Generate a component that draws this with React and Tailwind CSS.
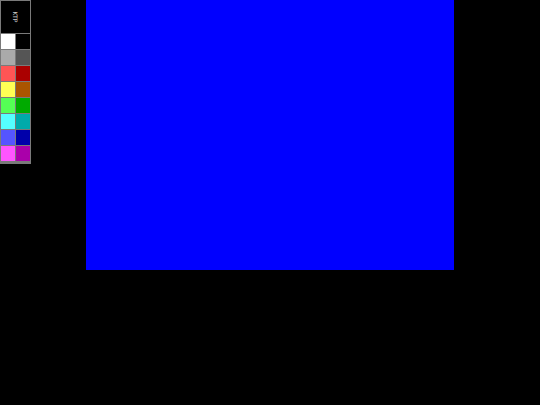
import React from 'react'

const colors = [
  ['#ffffff', '#000000'],
  ['#aaaaaa', '#555555'],
  ['#ff5555', '#aa0000'],
  ['#ffff55', '#aa5500'],
  ['#55ff55', '#00aa00'],
  ['#55ffff', '#00aaaa'],
  ['#5555ff', '#0000aa'],
  ['#ff55ff', '#aa00aa'],
]

const App = () => {
  return (
    <div className="relative w-[540px] h-[405px] bg-black overflow-hidden">
      <div className="flex justify-center">
        <div className="w-[368px] h-[270px] bg-[#0000ff]"></div>
      </div>

      <div className="absolute left-0 top-0 w-[31px] bg-[#7a7a7a] p-[1px] flex flex-col gap-[1px]">
        <div className="h-[32px] bg-black flex items-center justify-center">
          <span
            className="rotate-90 text-[6px] leading-none text-[#cccccc]"
            style={{ fontFamily: '"DejaVu Sans", sans-serif' }}
          >
            KTP
          </span>
        </div>
        {colors.map((row, i) => (
          <div key={i} className="flex gap-[1px]">
            {row.map((c) => (
              <div key={c} className="w-[14px] h-[15px]" style={{ backgroundColor: c }}></div>
            ))}
          </div>
        ))}
        <div className="h-[1px]"></div>
      </div>
    </div>
  )
}

export default App
